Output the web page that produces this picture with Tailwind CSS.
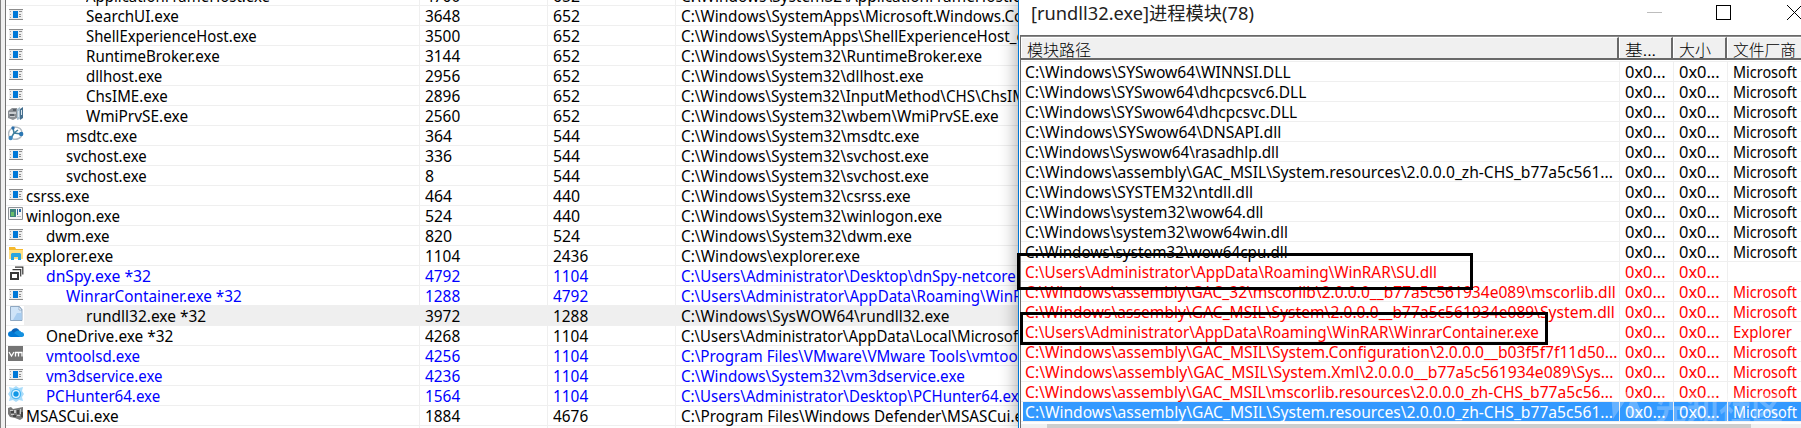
<!DOCTYPE html>
<html lang="zh">
<head>
<meta charset="utf-8">
<title>Process modules</title>
<script src="https://cdn.jsdelivr.net/npm/@tailwindcss/browser@4"></script>
</head>
<body class="bg-white overflow-hidden">
<svg class="hidden">
  <symbol id="app" viewBox="0 0 16 16"><path fill="#eee" d="M1 3h14v11H1z"/><path fill="#8c8c8c" d="M1 3h14v1H1zM1 13h14v1H1zM11 5h3v1h-3zM11 8h2v1h-2zM11 10h2v1h-2z"/><path fill="#a8a8a8" d="M2 5h1v1H2zM2 8h1v1H2zM2 11h1v1H2z"/><path fill="#0078d7" d="M5 5h5v7H5z"/></symbol>
  <symbol id="wmi" viewBox="0 0 16 16"><path fill="#8c9196" d="M0 5l4-3h5v10l-4 2-5-2z"/><path fill="#c8ccd0" d="M1 6h7v2H1zM2 10h5v1H2z"/><path fill="#596068" d="M5 3h3v2H5zM2 8h4v2H2z"/><path fill="#a7bfd0" d="M9 3l3-2v12l-3 1z"/><path fill="#46708f" d="M12 3l3-2v11l-3 2z"/><path fill="#dbe6ee" d="M10 5h1v6h-1zM13 4h1v5h-1z"/></symbol>
  <symbol id="msdtc" viewBox="0 0 16 16"><path fill="none" stroke="#b3bcc3" stroke-width="1.4" d="M4 2C0 5 0 9 2 12M6 1c5 0 8 2 8 6M5 13c4 1 8-1 9-4"/><path fill="none" stroke="#41819f" stroke-width="1.5" d="M5 2l1 5-3 5M6 7l7 1M6 7l4-3"/><circle cx="5" cy="2" r="1.7" fill="#2b6da8"/><circle cx="2.7" cy="12" r="2.2" fill="#3b86bd"/><circle cx="13.2" cy="8" r="2.2" fill="#2b77b3"/></symbol>
  <symbol id="winlogon" viewBox="0 0 16 16"><path fill="#f5f5f5" stroke="#8c9196" d="M.5 1.5h14v12H.5z"/><path fill="#3e837c" d="M2 3h6v8H2z"/><path fill="#6abf69" d="M3 6h3v4H3z"/><path fill="#2d6aa3" d="M9 3h1v6H9zM11 3h2v3h-2z"/><path fill="#b5c0c8" d="M9 10h4v1H9z"/></symbol>
  <symbol id="explorer" viewBox="0 0 16 16"><path fill="#f5b92e" d="M1 1h6l1 2h7v3H1z"/><path fill="#ffdf83" d="M1 4h14v9H1z"/><path fill="#2aa5e0" d="M3 8l1-1h8l1 1v6h-3v-3H6v3H3z"/></symbol>
  <symbol id="dnspy" viewBox="0 0 16 16"><path fill="none" stroke="#383838" stroke-width="2" d="M3 7h7v6H3z"/><path fill="none" stroke="#383838" stroke-width="1.2" d="M4.500 3.600h8.200v6.900M7 1.200h7.800V8.500"/></symbol>
  <symbol id="doc" viewBox="0 0 16 16"><path fill="#cfe4f8" stroke="#7896b4" stroke-width=".8" d="M2.500.5h9l2.500 3v11H2.500z"/><path fill="#fff" stroke="#7896b4" stroke-width=".6" d="M11 .8V4h3z"/><path fill="#a8cdf0" d="M9 7h4.500v7H5z"/></symbol>
  <symbol id="onedrive" viewBox="0 0 16 16"><path fill="#0b63b8" d="M3 6c1-4 6-5 8-2l1 3-6 4-4-1z"/><path fill="#1490df" d="M6 7c4-4 7-2 7-1 4 0 4 5 1 5H4z"/><path fill="#0078d4" d="M0 8c0-3 4-4 6-1l6 4H3c-2 0-3-1-3-3z"/></symbol>
  <symbol id="vm" viewBox="0 0 16 16"><path fill="#747474" d="M0 0h15v15H0z"/><path fill="none" stroke="#fff" stroke-width="1.300" d="M1 6l2.500 4L6 6M7.500 10.500v-4h3v4M10.500 6.500h3.500v4"/></symbol>
  <symbol id="hunter" viewBox="0 0 16 16"><path fill="#a9dcfa" d="M1 1l4 1 3-2 3 2 4-1-1 4 2 3-2 3 1 4-4-1-3 2-3-2-4 1 1-4-2-3 2-3z"/><circle cx="8" cy="8" r="5.200" fill="#52b9f3"/><circle cx="8" cy="8" r="3.900" fill="#e3f5ff"/><circle cx="8" cy="8" r="2.700" fill="#1097e6"/></symbol>
  <symbol id="msas" viewBox="0 0 16 16"><path fill="#777" d="M0 2l3-1 2 2 5-1 5-1v11l-3 2-5-2-5-1-2-3z"/><path fill="#c9c9c9" d="M2 4h3v1H2zM6 4h2v3H6zM3 8h3v1H3zM9 9h3v1H9zM12 3h1v5h-1z"/><path fill="#444" d="M3 5h3v2H3zM9 4h2v4H9zM5 9h3v2H5zM13 6h2v5h-2z"/></symbol>
</svg>

<main class="relative w-[1801px] h-[428px] overflow-hidden bg-white text-black text-[16px] leading-[20px] font-['Noto_Sans','Noto_Sans_CJK_SC',sans-serif] whitespace-nowrap">
  <section class="flex w-[1018px] h-[428px] overflow-hidden">
    <div class="w-[6px] shrink-0 bg-[#f0f0f0] border-l border-l-[#808080] border-r border-r-[#757575]"></div>
    <div id="processes" class="flex flex-col w-[1012px] shrink-0 -mt-[14px]"></div>
  </section>

  <section class="absolute left-[1018px] top-0 w-[783px] h-[428px] bg-white border-l border-[#0078d7] shadow-[-2px_0_16px_rgba(0,0,0,0.32)] flex flex-col">
    <header class="h-[35px] shrink-0 flex justify-between">
      <div class="pl-[12px] pt-[1px] leading-[24px] text-[18.500px] text-[#222]"><span class="inline-block origin-left" data-w="223">[rundll32.exe]进程模块(78)</span></div>
      <svg class="w-[160px] h-[35px]" viewBox="1641 0 160 35" fill="none" shape-rendering="crispEdges"><path stroke="#bdbdbd" d="M1647 12.500h15"/><path stroke="#000" d="M1716.500 5.500h14v14h-14z"/><path stroke="#000" shape-rendering="auto" d="M1787 5l15 15M1787 20l15-15"/></svg>
    </header>
    <div class="ml-[1px] flex flex-col grow border-l border-t border-[#696969]">
      <div class="h-[24px] shrink-0 flex bg-[#f0f0f0] border-b-2 border-b-[#696969] border-t border-t-[#8a8a8a] text-[16px] leading-[23px] font-['Noto_Sans_CJK_SC',sans-serif] font-light">
        <div class="w-[598px] shrink-0 pl-[5px] border-l border-t border-l-white border-t-white border-r-2 border-r-[#696969]"><span class="inline-block origin-left" data-w="64">模块路径</span></div>
        <div class="w-[54px] shrink-0 pl-[5px] border-l border-t border-l-white border-t-white border-r-2 border-r-[#696969]"><span class="inline-block origin-left" data-w="31">基...</span></div>
        <div class="w-[54px] shrink-0 pl-[5px] border-l border-t border-l-white border-t-white border-r-2 border-r-[#696969]"><span class="inline-block origin-left" data-w="32">大小</span></div>
        <div class="w-[75px] shrink-0 pl-[5px] border-l border-t border-white"><span class="inline-block origin-left" data-w="63">文件厂商</span></div>
      </div>
      <div class="h-[2px] shrink-0 border-b border-[#efefef]"></div>
      <div id="modules" class="flex flex-col"></div>
      <div class="h-[2px] shrink-0 bg-white"></div>
      <div class="h-[4px] shrink-0 flex bg-[#f0f0f0] pl-[26px]"><div class="w-[704px] bg-[#cdcdcd]"></div></div>
    </div>
  </section>

  <div class="absolute left-[1017px] top-[253px] w-[456px] h-[37px] border-[3px] border-black"></div>
  <div class="absolute left-[1020px] top-[312px] w-[528px] h-[33px] border-[3px] border-black"></div>
  <div class="absolute left-[1610px] top-[390px] flex items-center gap-[10px] text-white/25 text-[32px] leading-[32px] font-bold font-['Noto_Sans_CJK_SC',sans-serif]">
    <svg class="w-[35px] h-[30px]" viewBox="0 0 35 30" fill="currentColor"><path d="M1 1h20L3 28zM23 2l11 25H22l-5-8z"/></svg><span>先知社区</span>
  </div>
</main>

<script>
const P='C:\\', W='C:\\Windows\\', S='C:\\Windows\\System32\\', U='C:\\Users\\Administrator\\';
// icon, indent, name, name end x, pid, parent pid, path, path end x, colour
const processes = [
 ['',3,'ApplicationFrameHost.exe',270,'4760','652',S+'ApplicationFrameHost.e',1021],
 ['app',3,'SearchUI.exe',179,'3648','652',W+'SystemApps\\Microsoft.Windows.Co',1023],
 ['app',3,'ShellExperienceHost.exe',257,'3500','652',W+'SystemApps\\ShellExperienceHost_c',1024],
 ['app',3,'RuntimeBroker.exe',220,'3144','652',S+'RuntimeBroker.exe',982],
 ['app',3,'dllhost.exe',162,'2956','652',S+'dllhost.exe',924],
 ['app',3,'ChsIME.exe',168,'2896','652',S+'InputMethod\\CHS\\ChsIM',1026],
 ['wmi',3,'WmiPrvSE.exe',188,'2560','652',S+'wbem\\WmiPrvSE.exe',999],
 ['msdtc',2,'msdtc.exe',137,'364','544',S+'msdtc.exe',919],
 ['app',2,'svchost.exe',147,'336','544',S+'svchost.exe',929],
 ['app',2,'svchost.exe',147,'8','544',S+'svchost.exe',929],
 ['app',0,'csrss.exe',89,'464','440',S+'csrss.exe',911],
 ['winlogon',0,'winlogon.exe',120,'524','440',S+'winlogon.exe',942],
 ['app',1,'dwm.exe',110,'820','524',S+'dwm.exe',912],
 ['explorer',0,'explorer.exe',113,'1104','2436',W+'explorer.exe',860],
 ['dnspy',1,'dnSpy.exe *32',151,'4792','1104',U+'Desktop\\dnSpy-netcore',1016,'b'],
 ['app',2,'WinrarContainer.exe *32',242,'1288','4792',U+'AppData\\Roaming\\WinR',1022,'b'],
 ['doc',3,'rundll32.exe *32',206,'3972','1288',W+'SysWOW64\\rundll32.exe',949,'s'],
 ['onedrive',1,'OneDrive.exe *32',173,'4268','1104',U+'AppData\\Local\\Microsof',1018],
 ['vm',1,'vmtoolsd.exe',140,'4256','1104',P+'Program Files\\VMware\\VMware Tools\\vmtoo',1018,'b'],
 ['app',1,'vm3dservice.exe',163,'4236','1104',S+'vm3dservice.exe',965,'b'],
 ['hunter',1,'PCHunter64.exe',160,'1564','1104',U+'Desktop\\PCHunter64.ex',1019,'b'],
 ['msas',0,'MSASCui.exe',119,'1884','4676',P+'Program Files\\Windows Defender\\MSASCui.e',1023],
 ['',0,'',26,'','','',681]
];
const pad=['pl-[2px]','pl-[22px]','pl-[42px]','pl-[62px]'];
const fit=(t,w)=>t?`<span class="inline-block origin-left" data-w="${w}">${t}</span>`:'';
const num=t=>fit(t,t.length*8.9);
document.getElementById('processes').innerHTML=processes.map(([ic,lv,n,e,pid,pp,path,pe,c])=>{
 const line=c==='s'?'border-[#efefef] bg-[#efefef]':'border-[#efefef]';
 return `<div class="flex h-[20px] shrink-0 border-b leading-[20px] ${line} ${c==='b'?'text-[#0000ff]':''}">
  <div class="w-[18px] shrink-0 bg-white pl-[2px]">${ic?`<svg class="w-[16px] h-[16px]"><use href="#${ic}"/></svg>`:''}</div>
  <div class="w-[396px] shrink-0 ${pad[lv]} border-r border-[#efefef]">${fit(n,e-26-lv*20)}</div>
  <div class="w-[128px] shrink-0 pl-[5px] border-r border-[#efefef]">${num(pid)}</div>
  <div class="w-[128px] shrink-0 pl-[5px] border-r border-[#efefef]">${num(pp)}</div>
  <div class="w-[342px] shrink-0 pl-[5px]">${fit(path,pe-681)}</div></div>`}).join('');
const G=W+'assembly\\GAC_MSIL\\';
const modules=[
 [W+'SYSwow64\\WINNSI.DLL',1291],[W+'SYSwow64\\dhcpcsvc6.DLL',1306],[W+'SYSwow64\\dhcpcsvc.DLL',1297],
 [W+'SYSwow64\\DNSAPI.dll',1281],[W+'Syswow64\\rasadhlp.dll',1279],[G+'System.resources\\2.0.0.0_zh-CHS_b77a5c561...',1613],
 [W+'SYSTEM32\\ntdll.dll',1253],[W+'system32\\wow64.dll',1263],[W+'system32\\wow64win.dll',1288],[W+'system32\\wow64cpu.dll',1288],
 [U+'AppData\\Roaming\\WinRAR\\SU.dll',1437,'r',''],
 [W+'assembly\\GAC_32\\mscorlib\\2.0.0.0__b77a5c561934e089\\mscorlib.dll',1616,'r'],
 [G+'System\\2.0.0.0__b77a5c561934e089\\System.dll',1615,'r'],
 [U+'AppData\\Roaming\\WinRAR\\WinrarContainer.exe',1539,'r','Explorer'],
 [G+'System.Configuration\\2.0.0.0__b03f5f7f11d50...',1617,'r'],
 [G+'System.Xml\\2.0.0.0__b77a5c561934e089\\Sys...',1613,'r'],
 [G+'mscorlib.resources\\2.0.0.0_zh-CHS_b77a5c56...',1613,'r'],
 [G+'System.resources\\2.0.0.0_zh-CHS_b77a5c561...',1613,'s']
];
document.getElementById('modules').innerHTML=modules.map(([p,e,c,v='Microsoft'])=>{
 const col=c==='r'?'text-[#ff0000]':c==='s'?'text-white':'';
 const bg=c==='s'?'bg-[#3399ff]':'';
 return `<div class="flex h-[20px] shrink-0 border-b border-[#efefef] leading-[20px] pl-[2px] ${col}"><div class="flex ${bg}">
  <div class="w-[597px] shrink-0 pl-[2px] border-r border-[#efefef]">${fit(p,e-1025)}</div>
  <div class="w-[54px] shrink-0 pl-[5px] border-r border-[#efefef]">${fit('0x0...',41)}</div>
  <div class="w-[54px] shrink-0 pl-[5px] border-r border-[#efefef]">${fit('0x0...',41)}</div>
  <div class="w-[75px] shrink-0 pl-[5px]">${fit(v,v==='Explorer'?59:64)}</div></div></div>`}).join('');
function fitAll(){
 document.querySelectorAll('[data-w]').forEach(s=>{
  if(s.offsetWidth) s.style.transform='scaleX('+(+s.dataset.w/s.offsetWidth)+')';
 });
}
fitAll();
window.addEventListener('load',()=>{fitAll();requestAnimationFrame(fitAll);});
document.fonts.ready.then(fitAll);
new ResizeObserver(fitAll).observe(document.querySelector('[data-w]'));
</script>
</body>
</html>
